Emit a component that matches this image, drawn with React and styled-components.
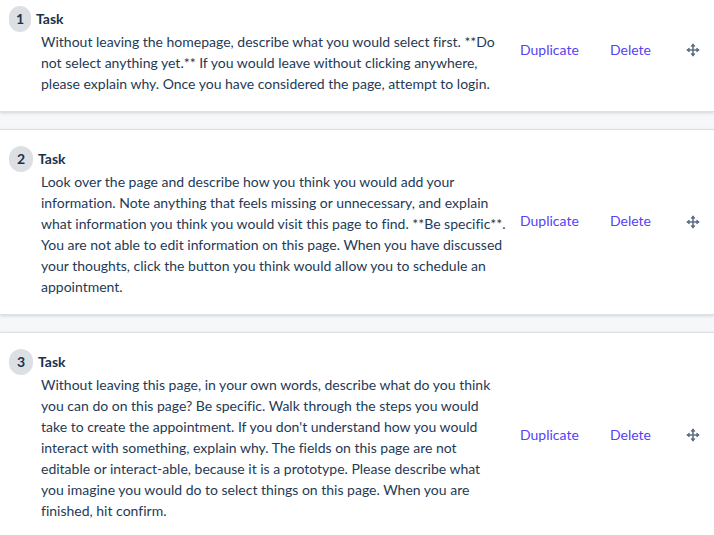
import React from "react";
import styled, { createGlobalStyle } from "styled-components";

const GlobalStyle = createGlobalStyle`
  * { box-sizing: border-box; }
  body {
    margin: 0;
    background: #f6f7f9;
    color: #1f3a56;
    font-family: Lato, "Open Sans", sans-serif;
    font-size: 14px;
    line-height: 21px;
    font-variant-ligatures: none;
  }
`;

const TaskList = styled.ol`
  list-style: none;
  margin: 0;
  padding: 0;
  display: flex;
  flex-direction: column;
  gap: 17px;
  overflow: hidden;
`;

const TaskCard = styled.li`
  display: flex;
  align-items: center;
  background: #fff;
  padding: ${(p) => (p.$first ? "6px" : "16px")} 14px 17px 9px;
  border-top: ${(p) => (p.$first ? "0" : "1px")} solid #dcdfe5;
  border-bottom: 1px solid #dcdfe5;
  box-shadow: 0 1px 3px rgba(40, 55, 80, 0.18);
`;

const TaskBody = styled.div`
  flex: 1;
  min-width: 0;
`;

const TaskHeading = styled.h2`
  display: flex;
  align-items: center;
  gap: 5px;
  margin: 0;
  color: #1a334d;
  font-size: 14px;
  line-height: 26px;
  font-weight: 700;
`;

const Badge = styled.span`
  width: ${(p) => (p.$narrow ? "22px" : "24px")};
  height: 26px;
  line-height: 25px;
  border-radius: 12px;
  background: #dce0e5;
  text-align: center;
`;

const Description = styled.p`
  margin: -1px 0 0 32px;
  white-space: pre-line;
`;

const Actions = styled.div`
  display: grid;
  grid-template-columns: 90px 76px 14px;
  align-items: center;
  justify-items: start;
  flex: none;
`;

const ActionButton = styled.button`
  border: 0;
  padding: 0 0 2px;
  background: none;
  color: #5442f5;
  font: inherit;
  cursor: pointer;
`;

const DragHandle = styled.button`
  display: flex;
  border: 0;
  padding: 0;
  background: none;
  color: #5f7186;
  cursor: move;
`;

const tasks = [
  "Without leaving the homepage, describe what you would select first. **Do\nnot select anything yet.** If you would leave without clicking anywhere,\nplease explain why. Once you have considered the page, attempt to login.",
  "Look over the page and describe how you think you would add your\ninformation. Note anything that feels missing or unnecessary, and explain\nwhat information you think you would visit this page to find. **Be specific**.\nYou are not able to edit information on this page. When you have discussed\nyour thoughts, click the button you think would allow you to schedule an\nappointment.",
  "Without leaving this page, in your own words, describe what do you think\nyou can do on this page? Be specific. Walk through the steps you would\ntake to create the appointment. If you don't understand how you would\ninteract with something, explain why. The fields on this page are not\neditable or interact-able, because it is a prototype. Please describe what\nyou imagine you would do to select things on this page. When you are\nfinished, hit confirm.",
];

function MoveIcon() {
  return (
    <svg
      width="14"
      height="14"
      viewBox="0 0 14 14"
      fill="currentColor"
      stroke="currentColor"
      strokeLinejoin="round"
      aria-hidden="true"
    >
      <path strokeWidth="1.6" d="M7 1v12M1 7h12" />
      <path
        strokeWidth="1"
        d="M7 .8l1.8 2.4H5.2zM7 13.2l1.8-2.4H5.2zM.8 7l2.4-1.8v3.6zM13.2 7l-2.4-1.8v3.6z"
      />
    </svg>
  );
}

export default function App() {
  return (
    <>
      <GlobalStyle />
      <TaskList>
        {tasks.map((text, i) => (
          <TaskCard key={text} $first={i === 0}>
            <TaskBody>
              <TaskHeading>
                <Badge $narrow={i === 0}>{i + 1}</Badge>
                Task
              </TaskHeading>
              <Description>{text}</Description>
            </TaskBody>
            <Actions>
              <ActionButton type="button">Duplicate</ActionButton>
              <ActionButton type="button">Delete</ActionButton>
              <DragHandle type="button" aria-label="Move task">
                <MoveIcon />
              </DragHandle>
            </Actions>
          </TaskCard>
        ))}
      </TaskList>
    </>
  );
}
